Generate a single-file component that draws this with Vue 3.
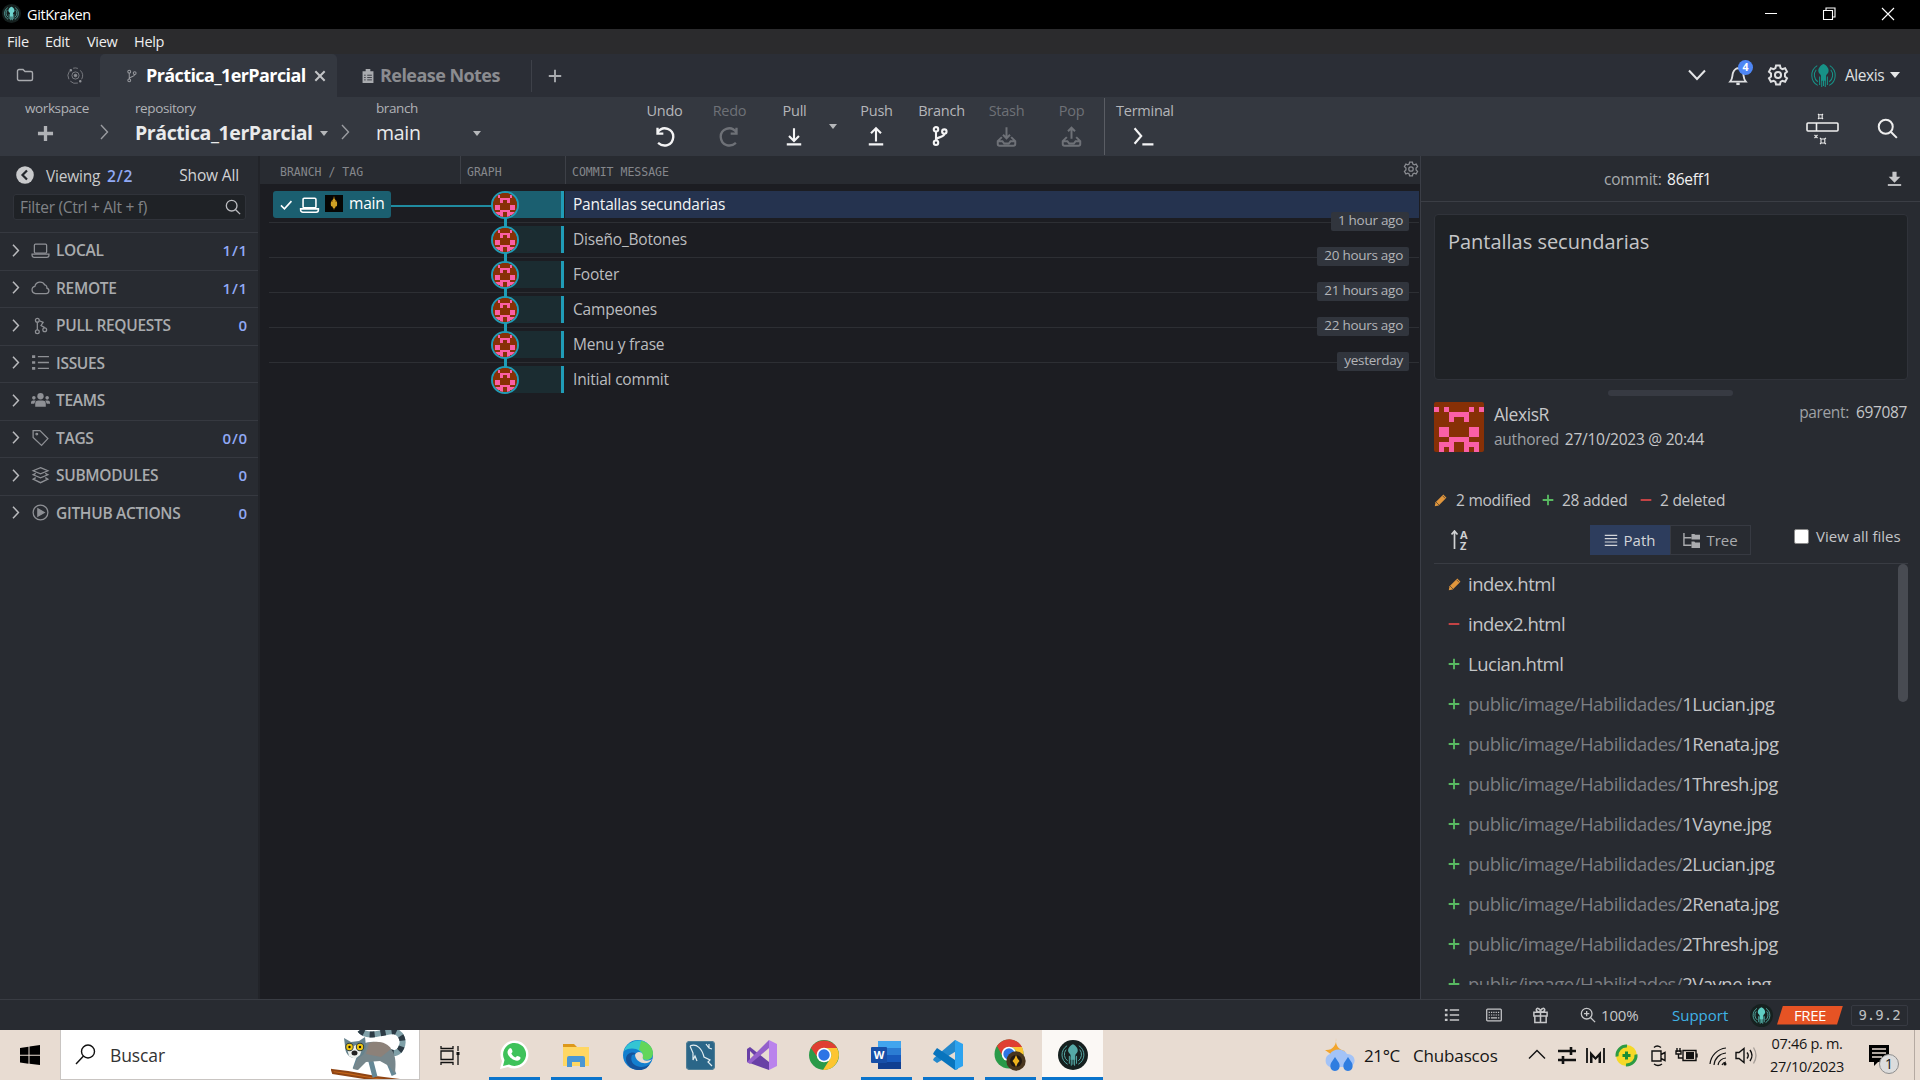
<script setup>
import { h } from 'vue'

const icons = {
  folder: '<path d="M1.5 4a1.5 1.5 0 0 1 1.500-1.500h4l2 2h6A1.500 1.500 0 0 1 16.500 6v6a1.500 1.500 0 0 1-1.500 1.500H3A1.500 1.500 0 0 1 1.500 12z"/>',
  branch: '<circle cx="4.500" cy="3" r="2"/><circle cx="4.500" cy="15" r="2"/><circle cx="12" cy="5" r="2"/><path d="M4.500 5v8M12 7c0 4-7.500 2-7.500 6"/>',
  pull: '<path d="M2.500 16.500h13M9 2v11M4.500 9l4.500 4.500L13.500 9"/>',
  push: '<path d="M2.500 16.500h13M9 14V2M4.500 6.500L9 2l4.500 4.500"/>',
  chevron: '<path d="M6 2l6.500 7L6 16"/>',
  search: '<circle cx="7.500" cy="7.500" r="6"/><path d="M12 12l5 5"/>',
  laptop: '<rect x="3.200" y="3" width="11.600" height="8.500" rx="1"/><path d="M1 12.500h16v1a2 2 0 0 1-2 2H3a2 2 0 0 1-2-2z"/>',
  cloud: '<path d="M4.300 14.800a3.500 3.500 0 0 1-.6-6.900A5 5 0 0 1 13 6.500a2.500 2.500 0 0 1 2 3 2.700 2.700 0 0 1-.8 5.300z"/>',
  pr: '<circle cx="6" cy="4" r="1.800"/><circle cx="6" cy="15" r="1.800"/><circle cx="13" cy="13" r="1.800"/><path d="M6 6v7M8 4.500l3.500 1.500-2 3 3.500 2"/>',
  list: '<path d="M6.500 3.500H17M6.500 9H17M6.500 14.500H17"/><path d="M1 3.500h3M1 9h3M1 14.500h3" stroke-width="2.600"/>',
  tag: '<path d="M2 2.500h6.500l7.500 7.500-6 6.500L2 9z"/><circle cx="5.500" cy="5.800" r=".8"/>',
  stack: '<path d="M9 1.500l7 3-7 3-7-3zM4.500 7L2 8.300l7 3 7-3L13.500 7M4.500 11L2 12.500l7 3.300 7-3.300-2.500-1.500"/>',
  play: '<circle cx="9" cy="9" r="7"/><path d="M6.500 5.500l6 3.500-6 3.500z" fill="currentColor"/>',
  gear: '<path d="M7.400 1.200h3.200l.5 2.200 1.500.8 2.200-.7 1.600 2.800-1.700 1.500v2.400l1.700 1.500-1.600 2.800-2.200-.7-1.500.8-.5 2.200H7.400l-.5-2.200-1.500-.8-2.200.7-1.600-2.800 1.700-1.500V7.800L1.600 6.300l1.600-2.800 2.200.7 1.500-.8z"/><circle cx="9" cy="9" r="2.500"/>',
  check: '<path d="M2.500 9.500L7 14 16 4"/>',
  plus: '<path d="M9 1v16M1 9h16"/>',
  minus: '<path d="M1 9h16"/>',
  cross: '<path d="M3 3l12 12M15 3L3 15"/>',
  lines: '<path d="M1 3h16M1 7.300h16M1 11.600h16M1 16h16"/>',
  undo: '<path d="M3 5.500C8-1.500 16.800 3 16.500 9.500 16 17 8 18.500 3.500 14.500M3 1.500v5h5"/>',
  stash: '<path d="M5 9.500L1.500 13v2.500a1.500 1.500 0 0 0 1.500 1.500h12a1.500 1.500 0 0 0 1.500-1.500V13L13 9.500M1.500 13h4l1.500 2h4l1.500-2h4M9 1v9M6 7.500L9 10.500l3-3"/>',
  pop: '<path d="M5 9.500L1.500 13v2.500a1.500 1.500 0 0 0 1.500 1.500h12a1.500 1.500 0 0 0 1.500-1.500V13L13 9.500M1.500 13h4l1.500 2h4l1.500-2h4M9 11V2M6 4.500l3-3 3 3"/>',
  terminal: '<path d="M1 2l6 7-6 7M8 16.500h10"/>',
  bell: '<path d="M2 14.500c2.500-3 1.500-5 2.500-8C5.500 3.500 8 2.500 9 2.500s3.500 1 4.500 4 0 5 2.500 8z"/><path d="M7.500 16.500h3" stroke-width="2.200"/>',
  gift: '<path d="M2 5.500h14v4H2zM3 9.500h12v7H3zM9 5.500v11M9 5.500C3 5.500 4 1 6.500 1.500S9 5.500 9 5.500 9 2 11.500 1.500 15 5.500 9 5.500"/>',
  keyboard: '<rect x=".8" y="2.500" width="16.400" height="13" rx="1"/><path d="M3 6h12M3 9h12" stroke-dasharray="1.400 1.200"/><path d="M3 12.200h1.500M5.500 12.200h7M13.500 12.200H15"/>',
  zoom: '<circle cx="7.500" cy="7.500" r="6"/><path d="M12 12l5 5M4.500 7.500h6M7.500 4.500v6"/>',
  pencil: '<path d="M1 17l1-5L12 2l4 4L6 16z" fill="currentColor" stroke="none"/><path d="M11 3.500l3.500 3.500M2.500 11.500L6.500 15.500" stroke="#282b31" stroke-width=".8"/>',
  download: '<path d="M6.500 1h5v6H16l-7 7-7-7h4.500z" fill="currentColor" stroke="none"/><path d="M1 16.800h16" stroke-width="2.200"/>',
  users: '<g fill="currentColor" stroke="none"><circle cx="9" cy="5" r="3"/><path d="M4 15v-3a3 3 0 0 1 3-3h4a3 3 0 0 1 3 3v3z"/><circle cx="2.700" cy="6.500" r="1.700"/><circle cx="15.300" cy="6.500" r="1.700"/><path d="M0 12v-1a2 2 0 0 1 2-2h2.500L3 12zM18 12v-1a2 2 0 0 0-2-2h-2.500L15 12z"/></g>',
  orbit: '<circle cx="9" cy="9" r="3.800"/><circle cx="9" cy="9" r="1.400" fill="currentColor"/><path d="M14 3.500A8 8 0 0 1 15.500 13M11.500 17A8 8 0 0 1 3.500 15M2 13A8 8 0 0 1 2.500 4.500M6.500 1.300A8 8 0 0 1 11.500 1.500"/><path d="M4 3.500h.1M14 15h.1" stroke-width="2.600" stroke-linecap="round"/>',
  clip: '<path d="M2 3h14v15H2zM6 0h6v4H6z" fill="currentColor" stroke="none"/><path d="M4 8h2M8 8h6M4 11h2M8 11h6M4 14h2M8 14h6" stroke="#2b2e36"/>',
  tree: '<path d="M1 1v13h8M1 6h8"/><path d="M9 2h3l1 1h5v5H9zM9 10h3l1 1h5v6H9z" fill="currentColor" stroke="none"/>',
  wand: '<rect x="1" y="11" width="31" height="8" rx="1"/><path d="M10.500 11v8"/><g stroke-width="1.100"><path d="M12 2l1 1M17 2l-1 1M12 7l1-1M17 7l-1-1M12.800 2.800h3.400v3.400h-3.400zM14 26l1 1M20 26l-1.500 1M14 32l1-1M20 32l-1.500-1M15 27h3.800v4H15zM8.500 23l3 3M11.500 23l-3 3"/></g>'
}

const Icon = (p) =>
  h('svg', {
    class: 'ico', viewBox: p.box || '0 0 18 18', width: p.w || p.s || 18, height: p.h || p.s || 18,
    fill: 'none', stroke: 'currentColor', 'stroke-width': p.sw || 1.4, innerHTML: icons[p.n]
  })
Icon.props = ['n', 's', 'w', 'h', 'sw', 'box']

const Kraken = (p) =>
  h('svg', {
    class: 'ico', viewBox: '0 0 24 24', width: p.s, height: p.s, fill: 'none', stroke: p.c, 'stroke-width': 1.2,
    innerHTML:
      (p.disc ? '<circle cx="12" cy="12" r="12" fill="#16201f" stroke="none"/>' : '') +
      `<g ${p.disc ? 'transform="translate(2.600 2.600) scale(.78)"' : ''}><path d="M12 1C9 2 6 6 7.400 9c.7 1.500 2.200 2 2.200 3.500V17h4.800v-4.500c0-1.500 1.500-2 2.200-3.500C18 6 15 2 12 1z" fill="${p.c}" stroke="none"/>
      <path d="M10.300 14v9M13.700 14v9M12 16v6M8.300 13v8M15.700 13v8M6 2.500A11 11 0 0 0 6.500 21.500M18 2.500A11 11 0 0 1 17.500 21.500M5 6.500A8 8 0 0 0 6.500 18M19 6.500A8 8 0 0 1 17.500 18" stroke-width="1"/></g>`
  })
Kraken.props = ['s', 'c', 'disc']

const pixels = [
  [0, 1], [2, 1], [7, 1], [9, 1], [3, 2], [4, 2], [5, 2], [6, 2], [3, 3], [6, 3],
  [1, 5], [2, 5], [7, 5], [8, 5], [1, 6], [2, 6], [7, 6], [8, 6], [3, 7], [4, 7], [5, 7], [6, 7],
  [1, 8], [2, 8], [3, 8], [6, 8], [7, 8], [8, 8], [1, 9], [3, 9], [6, 9], [8, 9]
]
const Identicon = () =>
  h('svg', { class: 'identicon', viewBox: '0 0 10 10', 'shape-rendering': 'crispEdges' }, [
    h('rect', { width: 10, height: 10, fill: '#873006' }),
    ...pixels.map(([x, y]) => h('rect', { x, y, width: 1, height: 1, fill: '#fb5fa6' }))
  ])

const sections = [
  { icon: 'laptop', label: 'LOCAL', count: '1/1' },
  { icon: 'cloud', label: 'REMOTE', count: '1/1' },
  { icon: 'pr', label: 'PULL REQUESTS', count: '0' },
  { icon: 'list', label: 'ISSUES', count: '' },
  { icon: 'users', label: 'TEAMS', count: '' },
  { icon: 'tag', label: 'TAGS', count: '0/0' },
  { icon: 'stack', label: 'SUBMODULES', count: '0' },
  { icon: 'play', label: 'GITHUB ACTIONS', count: '0' }
]
const commits = [
  { msg: 'Pantallas secundarias', age: '1 hour ago' },
  { msg: 'Diseño_Botones', age: '20 hours ago' },
  { msg: 'Footer', age: '21 hours ago' },
  { msg: 'Campeones', age: '22 hours ago' },
  { msg: 'Menu y frase', age: 'yesterday' },
  { msg: 'Initial commit', age: '' }
]
const dir = 'public/image/Habilidades/'
const files = [
  { k: 'pencil', dir: '', name: 'index.html' },
  { k: 'minus', dir: '', name: 'index2.html' },
  { k: 'plus', dir: '', name: 'Lucian.html' },
  ...['1Lucian', '1Renata', '1Thresh', '1Vayne', '2Lucian', '2Renata', '2Thresh', '2Vayne'].map((n) => ({ k: 'plus', dir, name: n + '.jpg' }))
]
</script>

<template>
  <div class="screen">
    <header class="titlebar">
      <Kraken :s="19" c="#6fd3cd" :disc="true" class="app-logo" />
      <span class="app-name">GitKraken</span>
      <svg class="win-ctl" width="130" height="14" viewBox="0 0 130 14" fill="none" stroke="#fff" stroke-width="1.100">
        <path d="M0 6.500h12M117 1l12 12M129 1l-12 12" />
        <path d="M58.500 3.500h9v9h-9zM61 3V1h9v9h-2" />
      </svg>
    </header>
    <nav class="menubar"><span>File</span><span>Edit</span><span>View</span><span>Help</span></nav>

    <div class="tabbar">
      <Icon n="folder" :w="20" :h="18" class="t-folder" />
      <Icon n="orbit" :s="17" :sw=".8" class="t-orbit" />
      <div class="tab active">
        <Icon n="branch" :w="13" :h="18" class="t-branch" />
        <b>Práctica_1erParcial</b>
        <Icon n="cross" :s="14" :sw="2.600" class="t-close" />
      </div>
      <div class="tab notes">
        <Icon n="clip" :w="14" :h="16" :sw="1.100" />
        <b>Release Notes</b>
      </div>
      <Icon n="plus" :s="14" :sw="2.400" class="t-plus" />
      <div class="account">
        <svg width="18" height="12" viewBox="0 0 18 12" fill="none" stroke="#e4e5e7" stroke-width="2"><path d="M1 1.500l8 8.500 8-8.500" /></svg>
        <span class="bell"><Icon n="bell" :w="20" :h="21" :sw="1.700" /><i>4</i></span>
        <Icon n="gear" :s="22" :sw="1.600" class="a-gear" />
        <Kraken :s="25" c="#179287" class="a-logo" />
        <span class="a-name">Alexis</span><em class="caret light"></em>
      </div>
    </div>

    <div class="toolbar">
      <div class="crumb c1"><small>workspace</small><Icon n="plus" :s="17" :sw="3.500" /></div>
      <Icon n="chevron" :w="18" :h="20" class="sep s1" />
      <div class="crumb c2"><small>repository</small><div class="val"><b>Práctica_1erParcial</b><em class="caret"></em></div></div>
      <Icon n="chevron" :w="18" :h="20" class="sep s2" />
      <div class="crumb c3"><small>branch</small><div class="val"><span>main</span><em class="caret"></em></div></div>
      <div class="actions">
        <div class="act"><span>Undo</span><Icon n="undo" :s="21" :sw="2" /></div>
        <div class="act off"><span>Redo</span><Icon n="undo" :s="21" :sw="2" class="flip" /></div>
        <div class="act"><span>Pull</span><Icon n="pull" :s="20" :sw="1.900" /></div>
        <em class="caret pull-caret"></em>
        <div class="act push"><span>Push</span><Icon n="push" :s="20" :sw="1.900" /></div>
        <div class="act"><span>Branch</span><Icon n="branch" :s="20" :sw="1.900" /></div>
        <div class="act off"><span>Stash</span><Icon n="stash" :w="23" :h="21" :sw="1.700" /></div>
        <div class="act off"><span>Pop</span><Icon n="pop" :w="23" :h="21" :sw="1.700" /></div>
        <div class="act term"><span>Terminal</span><Icon n="terminal" :w="26" :h="20" box="-1 0 21 18" :sw="1.900" /></div>
      </div>
      <Icon n="wand" :w="34" :h="34" box="0 0 34 34" :sw="1.600" class="wand" />
      <Icon n="search" :s="21" :sw="1.700" class="find" />
    </div>

    <main class="body">
      <aside class="left">
        <div class="viewing">
          <svg width="18" height="18" viewBox="0 0 18 18"><circle cx="9" cy="9" r="8.800" fill="#c9cacc" /><path d="M11 4.500L6.500 9l4.500 4.500" fill="none" stroke="#24272c" stroke-width="2.200" /></svg>
          <span class="vw">Viewing</span><span class="num">2/2</span><span class="all">Show All</span>
        </div>
        <div class="filter"><span>Filter (Ctrl + Alt + f)</span><Icon n="search" :s="16" :sw="1.500" /></div>
        <div v-for="s in sections" :key="s.label" class="section">
          <Icon n="chevron" :w="13" :h="15" :sw="1.800" box="3 0 12 18" class="arrow" />
          <Icon :n="s.icon" :s="19" :sw="1.200" class="kind" />
          <span>{{ s.label }}</span><strong>{{ s.count }}</strong>
        </div>
      </aside>

      <section class="graph">
        <div class="cols"><span class="h1">BRANCH / TAG</span><span class="h2">GRAPH</span><span class="h3">COMMIT MESSAGE</span><Icon n="gear" :s="16" :sw="1.400" /></div>
        <div class="rows">
          <div v-for="(c, i) in commits" :key="c.msg" class="row" :class="{ sel: i === 0, last: i === commits.length - 1 }">
            <div class="ref">
              <template v-if="i === 0">
                <div class="chip">
                  <Icon n="check" :s="14" :sw="2" /><Icon n="laptop" :w="21" :h="20" :sw="1.400" />
                  <svg class="flame" width="18" height="17" viewBox="0 0 18 17"><rect width="18" height="17" fill="#060604" /><path d="M9 1l1 3.500c2.300 1 2.600 4.500 1.800 6.500L9.800 13 9 15l-.8-2-2-2C5.400 9 5.700 5.500 8 4.500z" fill="#a87512" /><path d="M9 4v9M7 7v4M11 7v4" stroke="#ffd83c" stroke-width=".9" /></svg>
                  <span>main</span>
                </div>
                <div class="link"></div>
              </template>
            </div>
            <div class="node"><span class="avatar"><Identicon /></span></div>
            <div class="msg">{{ c.msg }}</div>
            <div v-if="c.age" class="age">{{ c.age }}</div>
          </div>
        </div>
      </section>

      <aside class="right">
        <div class="rhead"><span>commit:</span><b>86eff1</b><Icon n="download" :s="15" /></div>
        <div class="message">Pantallas secundarias</div>
        <div class="handle"></div>
        <div class="author">
          <Identicon />
          <div class="who"><p>AlexisR</p><p class="date"><span>authored</span> 27/10/2023 @ 20:44</p></div>
          <div class="parent"><span>parent:</span>697087</div>
        </div>
        <div class="stats">
          <Icon n="pencil" :s="14" class="pencil" /><span class="st1">2 modified</span>
          <Icon n="plus" :s="12" :sw="2.800" class="plus" /><span class="st2">28 added</span>
          <Icon n="minus" :s="12" :sw="2.800" class="minus" /><span>2 deleted</span>
        </div>
        <div class="modes">
          <svg class="sort-arrow" width="8" height="20" viewBox="0 0 8 20"><path d="M3.500 19V2M.5 4.500L3.500 1l3 3.500" fill="none" stroke="#d0d1d3" stroke-width="1.700" /></svg>
          <div class="az"><span>A</span><span>Z</span></div>
          <div class="toggle"><span class="on"><Icon n="lines" :s="14" :sw="1.500" />Path</span><span><Icon n="tree" :s="17" :sw="1.500" />Tree</span></div>
          <label><i></i>View all files</label>
        </div>
        <div class="files">
          <div class="flist">
            <div v-for="f in files" :key="f.name" class="file">
              <Icon :n="f.k" :s="f.k === 'pencil' ? 14 : 12" :sw="2.800" :class="f.k" />
              <span class="path"><span>{{ f.dir }}</span>{{ f.name }}</span>
            </div>
          </div>
          <div class="thumb"></div>
        </div>
      </aside>
    </main>

    <footer class="status">
      <Icon n="list" :s="16" :sw="1.700" /><Icon n="keyboard" :w="18" :h="16" class="g1" /><Icon n="gift" :s="17" :sw="1.600" class="g2" />
      <Icon n="zoom" :s="16" :sw="1.500" class="g3" /><span class="pct">100%</span><span class="sup">Support</span>
      <Kraken :s="23" c="#5fcfc4" :disc="true" class="g4" />
      <div class="free"><span>FREE</span></div><div class="ver">9.9.2</div>
    </footer>

    <div class="taskbar">
      <div class="start"><svg width="20" height="20" viewBox="0 0 20 20"><path d="M0 3l8.500-1.300v8H0zM9.500 1.500L20 0v9.700H9.500zM0 10.700h8.500v8L0 17.400zM9.500 10.700H20V20L9.500 18.700z" /></svg></div>
      <div class="searchbox">
        <svg width="21" height="21" viewBox="0 0 21 21" fill="none" stroke="#111" stroke-width="1.400"><circle cx="13" cy="7.500" r="6.500" /><path d="M8.500 12L1 20" /></svg>
        <span>Buscar</span>
        <svg class="lemur" width="78" height="49" viewBox="0 0 78 49" fill="none">
          <path d="M29 0c7 9 22 2 33 1 8 1 12 10 8 17-2 5-7 6-11 4" stroke="#7fa0a8" stroke-width="6" />
          <path d="M29 0c7 9 22 2 33 1 8 1 12 10 8 17-2 5-7 6-11 4" stroke="#2c3a44" stroke-width="6" stroke-dasharray="5 6" />
          <path d="M1 40l16 2 28 5 32 4H52L2 43z" fill="#c46518" stroke="#8f4514" stroke-width="2" />
          <path d="M30 22L24 39M38 24L44 47M56 28l7 17" stroke="#658896" stroke-width="5" />
          <path d="M32 14c8-4 24-3 30 8 4 8 2 17 2 22l-6-8-9-5-14 1-8 8-5-1 6-14z" fill="#77878c" />
          <path d="M38 13c9-3 19 0 22 6l-10 8-15-3z" fill="#8c8179" />
          <path d="M13 8l7 4 8-1 6-4 1 9c0 7-4 12-11 12S14 22 14 16z" fill="#66838e" />
          <path d="M15 15c2 0 5-1 8 1 3-2 8-2 9 0l-3 9-5 4-6-3z" fill="#edf1ee" />
          <circle cx="18.500" cy="17" r="4.200" fill="#333f3b" /><circle cx="29" cy="17" r="4.200" fill="#333f3b" />
          <circle cx="18.500" cy="17" r="3.200" fill="#f2c80f" /><circle cx="29" cy="17" r="3.200" fill="#f2c80f" />
          <circle cx="18.500" cy="17" r="1.200" fill="#111" /><circle cx="29" cy="17" r="1.200" fill="#111" />
          <ellipse cx="23.500" cy="23" rx="3" ry="2.500" fill="#222" />
        </svg>
      </div>
      <div class="app wide"><svg width="20" height="19" viewBox="0 0 20 19" fill="none" stroke="#111" stroke-width="1.300"><path d="M1 0v2.500h12V0M1 5h12v8.500H1zM1 19v-2.500h12V19M18 0v5M18 9v10" /><path d="M16.500 6h3v3h-3z" fill="#111" stroke="none" /></svg></div>
      <div class="app run"><svg width="30" height="30" viewBox="0 0 30 30"><path d="M1 29l2-8a14 14 0 1 1 6 6z" fill="#fff" /><path d="M4 26l1.500-6a11.500 11.500 0 1 1 4.500 4.500z" fill="#3ec25a" /><path d="M11 8c2 0 2.500 3 2.500 4l-1.200 1.500c1 2 2.500 3.200 4 4l1.800-1.500c1 0 3.800 1 3.500 2-1 4-6 3-9 .5-4-3-6-7-1.600-10.500z" fill="#fff" /></svg></div>
      <div class="app run"><svg width="28" height="26" viewBox="0 0 28 26"><path d="M1 2h11l3 3H1z" fill="#dd981b" /><path d="M1 5h26v19H1z" fill="#ffd763" /><path d="M5 25V16q0-2 2-2h14q2 0 2 2v9h-5v-5h-8v5z" fill="#4a97d4" /></svg></div>
      <div class="app"><svg width="30" height="30" viewBox="0 0 30 30"><circle cx="15" cy="15" r="15" fill="#137fcf" /><path d="M1 11C4-1 25-5 29 11c2 8-5 11-10 8 3-8-9-14-18-8z" fill="#34c5d3" /><path d="M18 1c10 2 14 10 11 16-3 4-8 3-10 1 2-5-1-7-3-8z" fill="#63d65a" /><path d="M9 15c-4 10 9 16 18 9-6 11-24 6-24-5 0-6 7-8 10-5z" fill="#14539b" /><path d="M12 15c2-5 8-3 8 1-2 5 5 6 9 3-3 7-16 5-17-4z" fill="#e8dcd2" /></svg></div>
      <div class="app"><svg width="29" height="29" viewBox="0 0 29 29" fill="none" stroke="#e3edf0" stroke-width="1.200"><rect x=".5" y=".5" width="28" height="28" rx="3" fill="#2b6688" stroke="#507f96" /><path d="M4 5c7-3 12 3 14 11l6 3-2 2 4 4M4 5l3 7v7l2-4 2 5M20 3l3 4 3 1M23 3v4" /></svg></div>
      <div class="app"><svg width="30" height="30" viewBox="0 0 30 30"><path d="M0 9l3-2 19 15v8L0 22z" fill="#6940a6" /><path d="M0 22l22-22v8L3 24z" fill="#9460cb" /><path d="M22 0l8 4v22l-8 4z" fill="#ba83ec" /><path d="M3 11v8l4-4z" fill="#e8dcd2" /></svg></div>
      <div class="app"><svg width="30" height="30" viewBox="0 0 30 30"><circle cx="15" cy="15" r="15" fill="#2a9a48" /><path d="M2 8A15 15 0 0 1 28 8H15a7 7 0 0 0-6 10z" fill="#df3f32" /><path d="M28 8a15 15 0 0 1-14 22l7-11a7 7 0 0 0-6-11z" fill="#fdc530" /><circle cx="15" cy="15" r="7.300" fill="#fff" /><circle cx="15" cy="15" r="5.700" fill="#2d75e5" /></svg></div>
      <div class="app run"><svg width="30" height="28" viewBox="0 0 30 28"><path d="M7 0h23v7H7z" fill="#41a5ee" /><path d="M7 7h23v7H7z" fill="#2b7cd3" /><path d="M7 14h23v7H7z" fill="#185abd" /><path d="M7 21h23v7H7z" fill="#103f91" /><rect y="6" width="16" height="16" rx="1" fill="#174fa8" /><text x="8" y="18" text-anchor="middle" class="w">W</text></svg></div>
      <div class="app run"><svg width="30" height="30" viewBox="0 0 30 30"><path d="M1 18l21-18 3 2v8L4 23 0 20z" fill="#2388cc" /><path d="M1 12L4 8l21 14v7l-3 1L0 14z" fill="#0874bd" /><path d="M22 0l8 4v22l-8 4z" fill="#2da3ef" /></svg></div>
      <div class="app run"><svg width="32" height="32" viewBox="-1 0 32 32"><circle cx="14" cy="15" r="14.500" fill="#2a9a48" /><path d="M2 7A14.500 14.500 0 0 1 27 8H14a7 7 0 0 0-6 10z" fill="#df3f32" /><path d="M27 8a15 15 0 0 1-9 21l3-11a7 7 0 0 0-6-10z" fill="#fdc530" /><circle cx="14" cy="15" r="7.300" fill="#fff" /><circle cx="14" cy="15" r="5.700" fill="#2d75e5" /><circle cx="21" cy="22" r="9.700" fill="#49361e" /><circle cx="21" cy="22" r="6" fill="#211811" /><path d="M21 16l1.500 3.500 2 2.500-2 2.500L21 28l-1.500-3.500-2-2.500 2-2.500z" fill="#efb31c" /></svg></div>
      <div class="app run current"><Kraken :s="30" c="#55aaa7" :disc="true" /></div>

      <div class="tray">
        <svg width="32" height="36" viewBox="0 0 32 36"><path d="M12 1c-1 9 4 12 9 13l-3 4H8L1 13c7 1 12-5 11-12z" fill="#f3a52b" /><path d="M6 30a7 7 0 0 1 0-13c3-6 14-6 17 0 9 0 10 10 3 13z" fill="#a3c3f7" /><path d="M11 20l4 6c2 5-1 8-4 8s-6-3-4-8zM24 20l4 6c2 5-1 8-4 8s-6-3-4-8z" fill="#2f7de0" /></svg>
        <span class="temp">21°C</span><span class="rain">Chubascos</span>
        <svg class="tray-icons" width="230" height="24" viewBox="0 0 230 24" fill="none" stroke="#111" stroke-width="1.400">
          <path d="M1 14.500l8-8 8 8" />
          <path d="M30 7h18M30 16h18" stroke-width="2.600" /><path d="M43 3v8M35 12v8" stroke-width="2.600" />
          <path d="M59 4v15M76 4v15" stroke-width="1.800" /><path d="M62 19V7l5.500 6L73 7v12h-2.500v-6l-3 3-3-3v6z" fill="#111" stroke="none" />
          <circle cx="98.500" cy="11.500" r="10.500" fill="#f5d928" stroke="none" /><path d="M99 2A9.500 9.500 0 0 0 89 12.500M98 21A9.500 9.500 0 0 0 108 10.500" stroke="#2c9b45" stroke-width="3" /><path d="M98.500 7.500v8M94.500 11.500h8" stroke="#178d35" stroke-width="3" />
          <path d="M124 7h9v10h-9zM133 10.500l4-2v8l-4-2M126 3.500q3-3 7 0M126 20q4 3 8 0" />
          <path d="M155 6.500h13v10h-13zM169 9.500v4M149 4v4M152 4v4M148 7h5v3h-5zM150.500 10v4h4" /><path d="M158 8h8v7h-8z" fill="#111" stroke="none" />
          <path d="M182 20A18 18 0 0 1 198 4M186 21A13 13 0 0 1 198 9M190 21A9 9 0 0 1 198 14M194 21A5 5 0 0 1 198 18" stroke-width="1.200" /><circle cx="197" cy="20" r="1.500" fill="#111" stroke="none" />
          <path d="M208 8.500h3l5-4v14l-5-4h-3zM219 8.500q2.500 3 0 6M222 6q4 5.500 0 11" /><path d="M225.500 3.500q5 8 0 16" stroke="#a8a09a" />
        </svg>
        <div class="clock"><span>07:46 p. m.</span><span>27/10/2023</span></div>
        <div class="notif"><svg width="21" height="21" viewBox="0 0 21 21"><path d="M0 0h20v17H9l-4 4v-4H0z" /><path d="M3 4h14M3 8h14M3 12h10" stroke="#e8dcd2" stroke-width="1.300" /></svg><i>1</i></div>
      </div>
    </div>
  </div>
</template>

<style>
html, body { margin: 0; overflow: hidden; background: #1c1d22; }
</style>
<style scoped>
.screen { width: 1920px; height: 1080px; display: flex; flex-direction: column; overflow: hidden; font-family: "Open Sans", "Noto Sans", sans-serif; font-size: 15px; color: #c4c5c8; white-space: nowrap; }
.screen * { box-sizing: border-box; }
svg { flex: none; display: block; }
i, em { font-style: normal; }
p { margin: 0; }
.caret { display: block; flex: none; width: 0; border: 4.500px solid transparent; border-top: 5px solid #b5b7ba; border-bottom: 0; }
.caret.light { border-top: 6px solid #e6e7e8; border-left-width: 5px; border-right-width: 5px; }

.titlebar { height: 29px; background: #000; display: flex; align-items: center; padding: 0 25px 0 2px; color: #fff; }
.app-logo { margin-top: -2px; }
.app-name { margin-left: 6px; font-size: 14.500px; letter-spacing: -.35px; }
.win-ctl { margin: -1px 0 0 auto; }
.menubar { height: 25px; background: #2b2b2d; display: flex; padding-left: 7px; font-size: 14.500px; line-height: 25px; color: #eeeeef; letter-spacing: -.3px; }
.menubar span:nth-child(1) { width: 38px; }
.menubar span:nth-child(2) { width: 42px; }
.menubar span:nth-child(3) { width: 47px; }

.tabbar { height: 43px; background: #2b2e36; display: flex; align-items: center; padding-left: 15px; color: #a9abaf; }
.t-orbit { margin-left: 32px; color: #8f9196; }
.tab { height: 43px; display: flex; align-items: center; font-size: 18px; }
.tab b { font-weight: 700; padding-bottom: 2px; }
.active { width: 237px; margin-left: 16px; padding-left: 26px; background: #343840; border-radius: 5px 5px 0 0; color: #999ba0; }
.active b { color: #fff; width: 160px; margin-left: 7px; letter-spacing: -.6px; }
.t-close { margin-left: 7px; color: #c3c4c7; }
.notes { width: 195px; padding-left: 24px; height: 32px; border-right: 1px solid #3e4149; color: #8b8c90; letter-spacing: -.55px; }
.notes .ico { color: #a9abaf; }
.notes b { margin-left: 5px; }
.t-plus { margin-left: 16px; }
.account { margin-left: auto; display: flex; align-items: center; width: 232px; padding-bottom: 1px; color: #dfe0e2; }
.bell { margin-left: 22px; position: relative; }
.bell i { position: absolute; left: 10px; top: -5px; width: 15px; height: 15px; border-radius: 50%; background: #4e86f5; color: #fff; font-size: 10.500px; font-weight: 700; line-height: 15px; text-align: center; }
.a-gear { margin-left: 19px; }
.a-logo { margin-left: 22px; }
.a-name { width: 45px; margin-left: 9px; font-size: 15.500px; letter-spacing: -.45px; }

.toolbar { height: 59px; background: #343840; display: flex; }
.crumb { display: flex; flex-direction: column; color: #b0b2b6; }
.crumb small { font-size: 13.500px; line-height: 19px; letter-spacing: -.4px; margin-top: 2px; }
.val { display: flex; align-items: center; height: 29px; font-size: 19.500px; color: #e9eaeb; }
.val em { margin-top: 2px; }
.c1 { margin-left: 25px; width: 75px; }
.c1 .ico { margin: 7px 0 0 12px; }
.sep { margin-top: 25px; color: #9a9ca1; }
.s1 { margin-left: -5px; }
.c2 { margin-left: 22px; width: 202px; }
.c2 b { width: 185px; letter-spacing: -.4px; }
.c3 { margin-left: 22px; width: 110px; }
.c3 span { width: 97px; letter-spacing: -.3px; }
.s2 { margin-left: -1px; }
.actions { margin-left: 146px; display: flex; }
.act { width: 65px; display: flex; flex-direction: column; align-items: center; font-size: 14.500px; letter-spacing: -.25px; color: #b4b6ba; }
.act span { height: 22px; line-height: 22px; margin: 3px 0 4px; }
.act .ico { color: #f4f4f5; margin-left: -1px; }
.act.off, .act.off .ico { color: #6e7177; }
.act .ico.flip { transform: scaleX(-1); }
.pull-caret { margin: 27px -7px 0 2px; }
.push { margin-left: 14px; }
.act.term { width: 68px; height: 57px; margin-top: 1px; border-left: 1px solid #5a5d64; padding-left: 11px; align-items: flex-start; }
.act.term span { margin-top: 2px; }
.act.term .ico { margin-left: 15px; }
.wand { margin: 15px 0 0 auto; color: #eee; }
.find { margin: 21px 22px 0 37px; color: #eee; }

.body { height: 843px; display: flex; }
.left { width: 260px; background: #282b31; border-right: 2px solid #222429; color: #b6b7ba; }
.viewing { height: 38px; padding: 0 0 0 16px; display: flex; align-items: center; font-size: 15.500px; }
.vw { margin-left: 12px; width: 61px; letter-spacing: -.2px; padding-top: 2px; color: #c9cacc; }
.num, .section strong { color: #91a9f5; font-weight: 600; letter-spacing: .8px; }
.num { padding-top: 1px; }
.all { margin-left: 46px; color: #d2d3d5; letter-spacing: -.15px; width: 74px; }
.filter { width: 233px; height: 26px; margin: 0 0 12px 13px; padding: 0 4px 0 6px; background: #1f2226; border: 1px solid #30333a; border-radius: 3px; display: flex; align-items: center; justify-content: space-between; font-size: 15.500px; color: #808287; letter-spacing: -.28px; }
.filter .ico { color: #bbbcc0; }
.section { height: 37.500px; border-top: 1px solid #363940; display: flex; align-items: center; padding: 0 10px 2.200px 9px; font-size: 15.500px; font-weight: 600; letter-spacing: -.3px; color: #a9abae; }
.arrow { color: #b9babd; }
.kind { margin: 0 6px 0 9px; color: #8e9095; }
.section strong { margin-left: auto; font-size: 15px; }

.graph { width: 1160px; background: #1c1d22; }
.cols { height: 28px; background: #282b31; display: flex; align-items: center; font: 11.500px "DejaVu Sans Mono", monospace; color: #85878c; }
.cols span { height: 28px; line-height: 33px; }
.h1 { width: 200px; padding-left: 20px; }
.h2 { width: 105px; padding-left: 6px; border-left: 1px solid #3d4047; }
.h3 { padding-left: 6px; border-left: 1px solid #3d4047; }
.cols .ico { margin: -3px 1px 0 auto; color: #898b90; }
.rows { padding: 4px 1px 0 9px; }
.row { height: 35px; position: relative; display: flex; align-items: flex-start; padding-top: 3px; border-bottom: 1px solid #2d2f34; }
.row.last { border-color: transparent; }
.ref { width: 236px; height: 27px; display: flex; align-items: center; padding-left: 4px; }
.chip { width: 118px; height: 27px; border-radius: 3px; background: #1b5f70; color: #fff; display: flex; align-items: center; padding-left: 6px; font-size: 15.500px; letter-spacing: -.2px; }
.chip .ico + .ico { margin-left: 6px; }
.flame { margin: -2px 0 0 5px; }
.chip span { margin: -3px 0 0 6px; }
.link { flex: 1; height: 2px; background: #208ba0; margin-top: 2px; }
.node { width: 59px; height: 27px; background: #1b2c31; border-right: 3px solid #209cb7; position: relative; }
.sel .node { background: #1b5f70; }
.avatar { position: absolute; z-index: 2; left: -14px; top: -.5px; width: 28px; height: 28px; border-radius: 50%; border: 2px solid #209cb7; overflow: hidden; background: #873006; }
.avatar .identicon { width: 24px; height: 24px; }
.row:not(.last) .node::before { content: ""; position: absolute; left: -1.500px; top: 20px; width: 3px; height: 22px; background: #209cb7; z-index: 1; }
.msg { flex: 1; height: 27px; line-height: 26px; margin-left: 1px; padding-left: 8px; font-size: 15.500px; letter-spacing: -.2px; color: #bbbcbf; }
.sel .msg { background: #25334f; color: #f2f3f5; }
.age { position: absolute; z-index: 3; right: 10px; bottom: -9px; height: 19px; padding: 0 6px 0 7px; border-radius: 2px; background: #31353d; line-height: 17px; font-size: 13.500px; letter-spacing: -.28px; color: #b3b4b8; }

.right { width: 500px; background: #282b31; border-left: 1px solid #3b3e46; display: flex; flex-direction: column; }
.rhead { height: 46px; border-bottom: 1px solid #3b3e45; display: flex; align-items: center; padding: 1px 18px 0 183px; font-size: 15.500px; letter-spacing: -.2px; color: #a9abae; }
.rhead span { width: 63px; }
.rhead b { font-weight: 400; color: #f1f1f2; }
.rhead .ico { margin: -2px 0 0 auto; color: #c6c7c9; }
.message { margin: 12px 12px 0 13px; height: 166px; background: #1f2226; border: 1px solid #30333a; border-radius: 4px; padding: 13px; font-size: 20px; line-height: 28px; letter-spacing: -.02px; color: #c5c6c8; }
.handle { width: 125px; height: 6px; margin: 10px 0 6px 187px; border-radius: 3px; background: #373a42; }
.author { height: 51px; margin: 0 13px 0 13px; display: flex; }
.author .identicon { width: 50px; height: 50px; border-radius: 2px; }
.who { margin-left: 10px; font-size: 17.500px; line-height: 25px; color: #c6c7c9; letter-spacing: -.45px; }
.date { font-size: 15.500px; letter-spacing: -.25px; }
.date span { display: inline-block; width: 67px; }
.date span, .parent span { color: #9fa1a5; }
.parent { margin-left: auto; line-height: 20px; font-size: 15.500px; letter-spacing: -.35px; }
.parent span { margin-right: 7px; }
.stats { height: 22px; margin: 36px 0 0 13px; display: flex; align-items: center; font-size: 15.500px; letter-spacing: -.25px; }
.pencil { color: #e0963c; }
.plus { color: #58b961; }
.minus { color: #cf4547; }
.st1 { margin-left: 8px; width: 86px; }
.st2 { margin-left: 8px; width: 78px; }
.stats .minus { margin-right: 8px; }
.modes { height: 54px; width: 474px; margin: -1px 0 0 13px; display: flex; padding-top: 15px; border-bottom: 1px solid #393c43; }
.sort-arrow { margin: 5px 1px 0 17px; }
.az { display: flex; flex-direction: column; width: 130px; padding-top: 4px; font: 700 11px/11px "Open Sans", sans-serif; color: #d0d1d3; }
.toggle { display: flex; height: 30px; font-size: 15px; }
.toggle span { display: flex; align-items: center; justify-content: center; gap: 6px; width: 81px; border: 1px solid #373a42; color: #aaabae; }
.toggle .on { width: 80px; background: #2d3d5d; border-color: #2d3d5d; color: #d3d5d9; padding-right: 1px; }
.modes label { display: flex; height: 22px; align-items: center; margin-left: 43px; }
.modes label i { width: 15px; height: 15px; background: #fff; border: 1px solid #8a8a8a; border-radius: 2px; margin-right: 7px; }
.files { height: 421px; margin: 0 12px 0 13px; display: flex; justify-content: space-between; overflow: hidden; }
.file { height: 40px; display: flex; align-items: center; font-size: 18.500px; letter-spacing: -.49px; color: #c4c5c7; padding-left: 14px; }
.file .pencil { margin: 0 6px 0 0; }
.file .plus, .file .minus { margin-right: 8px; }
.path { padding-bottom: 2px; }
.path span { color: #7d7f84; }
.thumb { width: 10px; height: 138px; background: #484b52; border-radius: 5px; }

.status { height: 31px; background: #282b31; border-top: 1px solid #393c43; display: flex; align-items: center; padding-left: 1444px; color: #c6c7c9; font-size: 15px; }
.g1 { margin-left: 25px; } .g2 { margin-left: 29px; } .g3 { margin-left: 31px; }
.pct { margin-left: 5px; width: 71px; letter-spacing: -.2px; }
.sup { width: 78px; color: #3fb3e6; }
.free { margin-left: 4px; width: 66px; height: 19px; background: #e65324; clip-path: polygon(9% 0, 100% 0, 91% 100%, 0 100%); text-align: center; line-height: 19px; color: #fff; letter-spacing: -.4px; }
.ver { margin-left: 8px; width: 57px; height: 21px; border: 1px solid #373a42; border-radius: 2px; font: 14px/19px "DejaVu Sans Mono", monospace; text-align: center; color: #bfc0c3; }

.taskbar { height: 50px; background: #e8dcd2; display: flex; color: #151515; }
.start { width: 60px; padding: 15px 20px; }
.searchbox { width: 360px; background: #fff; border: 1px solid #c9c5c2; border-top: 0; display: flex; align-items: center; padding-left: 14px; font-size: 17.500px; }
.searchbox span { margin-left: 14px; width: 221px; color: #333; letter-spacing: -.1px; }
.app { width: 62px; display: flex; align-items: center; justify-content: center; position: relative; }
.wide { width: 63px; padding-right: 3px; }
.run::after { content: ""; position: absolute; left: 6px; right: 5px; bottom: 0; height: 3px; background: #0a74cc; }
.current { background: #fbf8f5; width: 61px; margin-left: 1px; }
.current::after { left: 0; right: 0; }
.w { font: 700 11px "Open Sans", sans-serif; fill: #fff; }
.tray { margin-left: auto; width: 596px; display: flex; align-items: center; font-size: 17px; }
.temp { margin-left: 8px; width: 49px; letter-spacing: -.4px; }
.rain { width: 115px; letter-spacing: -.15px; }
.tray-icons { margin-top: 1px; }
.clock { width: 98px; margin-left: 0; display: flex; flex-direction: column; align-items: center; font-size: 14.500px; line-height: 23px; letter-spacing: -.3px; }
.notif { position: relative; margin-left: 13px; width: 46px; height: 50px; padding-top: 15px; border-right: 1px solid #b5aaa2; }
.notif i { position: absolute; left: 10px; top: 24px; width: 20px; height: 20px; border: 1px solid #8e8e8e; border-radius: 50%; background: #dcdcdc; text-align: center; line-height: 18px; font-size: 14px; }
</style>
